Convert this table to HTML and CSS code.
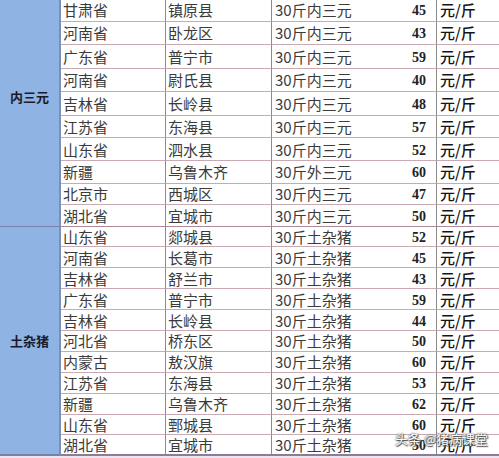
FILE: index.html
```html
<!DOCTYPE html>
<html lang="zh">
<head>
<meta charset="utf-8">
<title>生猪价格表</title>
<link rel="stylesheet" href="styles.css">
</head>
<body>
<div class="sheet">
  <div class="group g1"><span>内三元</span></div>
  <div class="group g2"><span>土杂猪</span></div>

  <div class="c prov">甘肃省</div><div class="c city">镇原县</div><div class="c kind">30斤内三元</div><div class="c price">45</div><div class="c unit">元/斤</div>
  <div class="c prov">河南省</div><div class="c city">卧龙区</div><div class="c kind">30斤内三元</div><div class="c price">43</div><div class="c unit">元/斤</div>
  <div class="c prov">广东省</div><div class="c city">普宁市</div><div class="c kind">30斤内三元</div><div class="c price">59</div><div class="c unit">元/斤</div>
  <div class="c prov">河南省</div><div class="c city">尉氏县</div><div class="c kind">30斤内三元</div><div class="c price">40</div><div class="c unit">元/斤</div>
  <div class="c prov">吉林省</div><div class="c city">长岭县</div><div class="c kind">30斤内三元</div><div class="c price">48</div><div class="c unit">元/斤</div>
  <div class="c prov">江苏省</div><div class="c city">东海县</div><div class="c kind">30斤内三元</div><div class="c price">57</div><div class="c unit">元/斤</div>
  <div class="c prov">山东省</div><div class="c city">泗水县</div><div class="c kind">30斤内三元</div><div class="c price">52</div><div class="c unit">元/斤</div>
  <div class="c prov">新疆</div><div class="c city">乌鲁木齐</div><div class="c kind">30斤外三元</div><div class="c price">60</div><div class="c unit">元/斤</div>
  <div class="c prov">北京市</div><div class="c city">西城区</div><div class="c kind">30斤内三元</div><div class="c price">47</div><div class="c unit">元/斤</div>
  <div class="c prov split">湖北省</div><div class="c city split">宜城市</div><div class="c kind split">30斤内三元</div><div class="c price split">50</div><div class="c unit split">元/斤</div>

  <div class="c prov">山东省</div><div class="c city">郯城县</div><div class="c kind">30斤土杂猪</div><div class="c price">52</div><div class="c unit">元/斤</div>
  <div class="c prov">河南省</div><div class="c city">长葛市</div><div class="c kind">30斤土杂猪</div><div class="c price">45</div><div class="c unit">元/斤</div>
  <div class="c prov">吉林省</div><div class="c city">舒兰市</div><div class="c kind">30斤土杂猪</div><div class="c price">43</div><div class="c unit">元/斤</div>
  <div class="c prov">广东省</div><div class="c city">普宁市</div><div class="c kind">30斤土杂猪</div><div class="c price">59</div><div class="c unit">元/斤</div>
  <div class="c prov">吉林省</div><div class="c city">长岭县</div><div class="c kind">30斤土杂猪</div><div class="c price">44</div><div class="c unit">元/斤</div>
  <div class="c prov">河北省</div><div class="c city">桥东区</div><div class="c kind">30斤土杂猪</div><div class="c price">50</div><div class="c unit">元/斤</div>
  <div class="c prov">内蒙古</div><div class="c city">敖汉旗</div><div class="c kind">30斤土杂猪</div><div class="c price">60</div><div class="c unit">元/斤</div>
  <div class="c prov">江苏省</div><div class="c city">东海县</div><div class="c kind">30斤土杂猪</div><div class="c price">53</div><div class="c unit">元/斤</div>
  <div class="c prov">新疆</div><div class="c city">乌鲁木齐</div><div class="c kind">30斤土杂猪</div><div class="c price">62</div><div class="c unit">元/斤</div>
  <div class="c prov">山东省</div><div class="c city">鄄城县</div><div class="c kind">30斤土杂猪</div><div class="c price">60</div><div class="c unit">元/斤</div>
  <div class="c prov last">湖北省</div><div class="c city last">宜城市</div><div class="c kind last">30斤土杂猪</div><div class="c price last">50</div><div class="c unit last">元/斤</div>

  <div class="watermark">头条 @猪病课堂</div>
</div>
</body>
</html>
```

FILE: styles.css
```css
html, body {
  margin: 0;
  padding: 0;
  background: #ece6f0;
}

body {
  width: 499px;
  height: 458px;
  overflow: hidden;
  font-family: "Noto Sans CJK SC", "Noto Sans", sans-serif;
}

.sheet {
  position: relative;
  margin-top: -2px;
  display: grid;
  grid-template-columns: 61px 105px 106px 108px 57px 62px;
  grid-template-rows:
    23.5px 23.5px 23.5px 23.5px 23.5px
    22.7px 22.7px 22.7px
    21.5px 21.5px
    20.9px 20.9px 20.9px 20.9px 20.9px 20.9px 20.9px 20.9px 20.9px 20.9px 20.9px;
  background: #fff;
  width: 499px;
}

.group {
  grid-column: 1;
  background: #8fb4e3;
  border-right: 2px solid #7d8fb8;
  box-sizing: border-box;
  display: flex;
  align-items: center;
  justify-content: center;
  font-weight: 700;
  font-size: 13px;
  color: #1a1a2a;
}

.g1 {
  grid-row: 1 / span 10;
  border-bottom: 1px solid #7c7fa8;
  padding-bottom: 31px;
}

.g2 {
  grid-row: 11 / span 11;
  border-bottom: 2px solid #7c7fa8;
}

.c {
  box-sizing: border-box;
  border-bottom: 1px solid #c9aab2;
  display: flex;
  align-items: center;
  font-size: 15px;
  color: #3b3b3b;
  white-space: nowrap;
  overflow: hidden;
  line-height: 1;
}

.prov {
  grid-column: 2;
  padding-left: 2px;
  border-right: 1px solid #8a8a8a;
}

.city {
  padding-left: 2px;
  border-right: 1px solid #8a8a8a;
}

.kind {
  padding-left: 3px;
}

.price {
  justify-content: flex-end;
  padding-right: 10px;
  padding-top: 3px;
  font-family: "Liberation Serif", serif;
  font-weight: 700;
  font-size: 14px;
  color: #222;
  border-right: 1px solid #8a8a8a;
}

.unit {
  padding-left: 3px;
  color: #141414;
  font-weight: 500;
}

.split {
  border-bottom-color: #b08a98;
}

.last {
  border-bottom: 2px solid #8c7c98;
}

.watermark {
  position: absolute;
  right: 11px;
  bottom: 8px;
  font-size: 13px;
  color: #fff;
  text-shadow: 0 0 1px #555, 0 0 2px #555, 1px 1px 1px #444;
  white-space: nowrap;
}
```
